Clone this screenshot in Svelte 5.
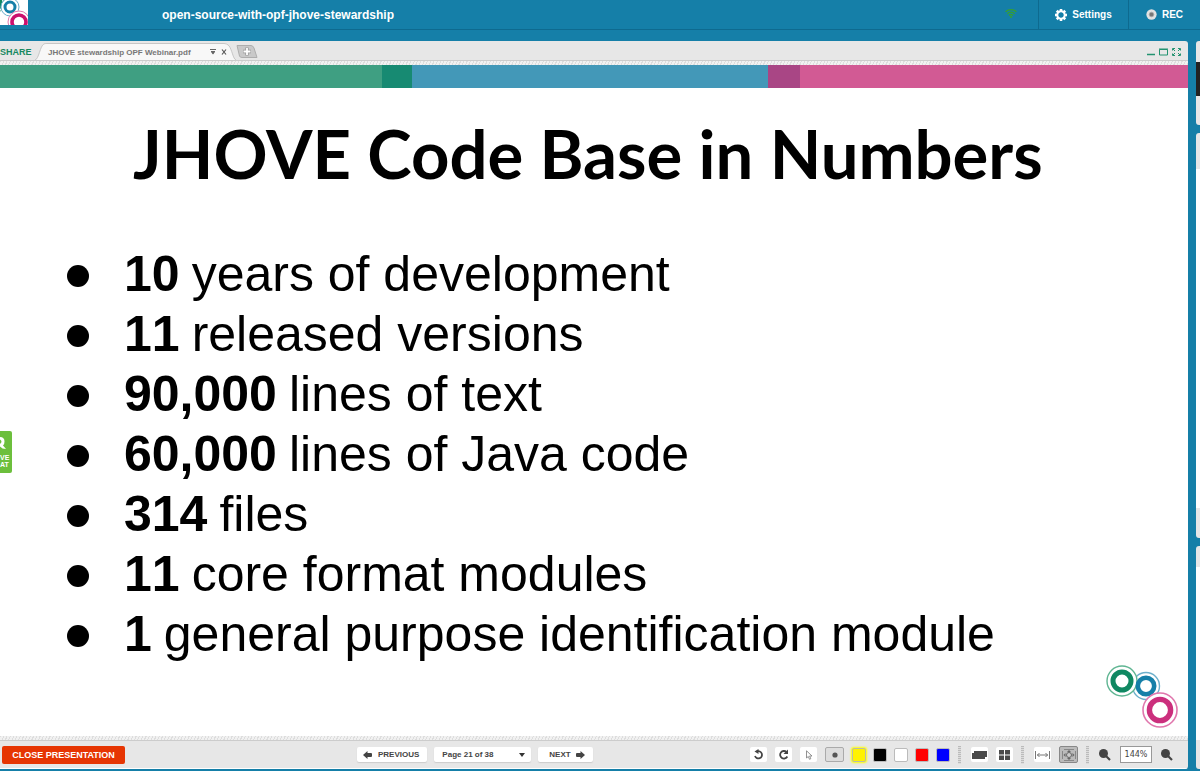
<script lang="ts">
  const stats = [
    { value: '10', text: 'years of development' },
    { value: '11', text: 'released versions' },
    { value: '90,000', text: 'lines of text' },
    { value: '60,000', text: 'lines of Java code' },
    { value: '314', text: 'files' },
    { value: '11', text: 'core format modules' },
    { value: '1', text: 'general purpose identification module' }
  ];

  const colors = [
    { name: 'Yellow', key: 'yellow' },
    { name: 'Black', key: 'black' },
    { name: 'White', key: 'white' },
    { name: 'Red', key: 'red' },
    { name: 'Blue', key: 'blue' }
  ];

  const teeth = [0, 45, 90, 135, 180, 225, 270, 315];

  let color = $state('yellow');
  let page = $state('21');
  let zoom = $state('144%');
</script>

{#snippet magnifier()}
  <svg width="12" height="12" viewBox="0 0 12 12">
    <circle cx="4.5" cy="4.5" r="4.5" fill="#444" />
    <path d="M7 7L11 11" stroke="#444" stroke-width="2.2" />
  </svg>
{/snippet}

<div class="room">
  <header class="topbar">
    <svg class="brand" width="28" height="25" viewBox="0 0 28 25" aria-hidden="true">
      <rect width="28" height="25" fill="#fff" />
      <circle cx="-7" cy="3" r="11" fill="none" stroke="#5fb592" />
      <circle cx="-7" cy="3" r="8" fill="none" stroke="#108862" stroke-width="3" />
      <circle cx="10" cy="7" r="9" fill="#fff" stroke="#6db0cc" />
      <circle cx="10" cy="7" r="5" fill="#fff" stroke="#157fa8" stroke-width="3" />
      <circle cx="19" cy="22" r="11" fill="#fff" stroke="#e077ad" />
      <circle cx="19" cy="22" r="7" fill="#fff" stroke="#cb0f6d" stroke-width="3.6" />
    </svg>
    <h1>open-source-with-opf-jhove-stewardship</h1>
    <svg class="signal" width="12" height="10" viewBox="0 0 12 10" fill="none" stroke="#37a030" stroke-width="1.3" aria-hidden="true">
      <path d="M.6 3.800A7.600 7.600 0 0 1 11.400 3.800M2.300 5.700A5.200 5.200 0 0 1 9.700 5.700M4 7.500A2.900 2.900 0 0 1 8 7.500" />
      <circle cx="6" cy="9" r="1" fill="#37a030" stroke="none" />
    </svg>
    <button class="top-action settings">
      <svg width="12" height="12" viewBox="-6 -6 12 12" aria-hidden="true">
        {#each teeth as angle}
          <rect x="-1.300" y="-6" width="2.600" height="3" fill="#fff" transform="rotate({angle})" />
        {/each}
        <circle r="3.700" fill="none" stroke="#fff" stroke-width="2" />
      </svg>
      Settings
    </button>
    <button class="top-action rec">
      <svg width="11" height="11" viewBox="0 0 12 12" aria-hidden="true">
        <circle cx="6" cy="6" r="5.600" fill="#e2e2e2" />
        <circle cx="6" cy="6" r="2.500" fill="#777" stroke="#aaa" />
      </svg>
      REC
    </button>
  </header>

  <div class="workspace">
    <main class="panel">
      <div class="tabs">
        <span class="share">SHARE</span>
        <div class="tab">
          <svg class="tab-shape" viewBox="0 0 202 18" preserveAspectRatio="none" aria-hidden="true">
            <path d="M0 18C4 17 5 3 9 1Q10 .5 12 .5H190Q193 .5 195 3C198 7 199 17 202 18" fill="#f8f8f8" stroke="#c4c4c4" />
          </svg>
          <span class="tab-name">JHOVE stewardship OPF Webinar.pdf</span>
          <button aria-label="Document menu">
            <svg width="6" height="6" viewBox="0 0 6 6" fill="none" stroke="#666"><path d="M0 .5H6M1 2.500H5M3 2V5" /><path d="M1 3H5L3 5.500Z" fill="#666" stroke="none" /></svg>
          </button>
          <button aria-label="Close document">
            <svg width="6" height="6" viewBox="0 0 6 6" stroke="#555" stroke-width="1.2"><path d="M1 .5L5 5.500M5 .5L1 5.500" /></svg>
          </button>
        </div>
        <button class="add" aria-label="Add document">
          <svg width="22" height="13" viewBox="0 0 22 13">
            <path d="M1 .5H15Q17 .5 18 3L21 12.500H6Q4 12.500 3.500 11Z" fill="#c9c9c9" stroke="#adadad" />
            <path d="M11 2.500V10.500M7 6.500H15" stroke="#999" stroke-width="3.400" />
            <path d="M11 3V10M7.500 6.500H14.500" stroke="#fff" stroke-width="1.800" />
          </svg>
        </button>
        <div class="window-tools">
          <button aria-label="Minimize"><svg width="8" height="8" viewBox="0 0 8 8"><path d="M0 6.500H8" stroke="#239370" stroke-width="1.500" /></svg></button>
          <button aria-label="Maximize"><svg width="9" height="8" viewBox="0 0 9 8"><path d="M.5 1.500H8.500V7H.5ZM0 1H9" fill="none" stroke="#239370" /></svg></button>
          <button aria-label="Full screen"><svg width="9" height="8" viewBox="0 0 9 8" fill="none" stroke="#239370"><path d="M.5 2.500V.5H3M6 .5H8.500V2.500M.5 5.500V7.500H3M6 7.500H8.500V5.500M1 1L3 3M8 1L6 3M1 7L3 5M8 7L6 5" /></svg></button>
        </div>
      </div>
      <div class="grain"></div>

      <section class="slide">
        <div class="stripe" aria-hidden="true"><i></i><i></i><i></i><i></i><i></i></div>
        <h2>JHOVE Code Base in Numbers</h2>
        <ul>
          {#each stats as stat}
            <li><b>{stat.value}</b> {stat.text}</li>
          {/each}
        </ul>
        <svg class="slide-logo" width="74" height="64" viewBox="0 0 74 64" aria-hidden="true">
          <circle cx="40" cy="21" r="13.500" fill="#fff" stroke="#6db0cc" stroke-width="1.400" />
          <circle cx="16" cy="16" r="15" fill="#fff" stroke="#5fb592" stroke-width="1.400" />
          <circle cx="16" cy="16" r="9" fill="#fff" stroke="#108862" stroke-width="5" />
          <circle cx="40" cy="21" r="8.200" fill="#fff" stroke="#157fa8" stroke-width="4.600" />
          <circle cx="54" cy="45" r="17" fill="#fff" stroke="#e077ad" stroke-width="1.600" />
          <circle cx="54" cy="45" r="10.600" fill="#fff" stroke="#cb2f7d" stroke-width="5.400" />
        </svg>
        <button class="chat" aria-label="Live chat">
          <svg width="6" height="14" viewBox="0 0 6 14"><path d="M0 1Q4.500 1 4.500 5.500Q4.500 8.500 3 9.500L6 13Q2 13 0 10.500Z" fill="#fff" /><path d="M0 3.500Q3 5.500 0 8Z" fill="#6cbf3c" /></svg>
          <span>VE</span>
          <span>AT</span>
        </button>
      </section>

      <div class="grain"></div>
      <footer class="toolbar">
        <button class="close">CLOSE PRESENTATION</button>
        <div class="pager">
          <button class="btn">
            <svg width="9" height="8" viewBox="0 0 9 8"><path d="M0 4L4.500 0V2H8Q9 2 9 3V5Q9 6 8 6H4.500V8Z" fill="#444" /></svg>
            PREVIOUS
          </button>
          <div class="page">
            <select aria-label="Page" bind:value={page}>
              <option value="21">Page 21 of 38</option>
              <option value="22">Page 22 of 38</option>
            </select>
            <svg width="6" height="4" viewBox="0 0 6 4" aria-hidden="true"><path d="M0 0H6L3 4Z" fill="#333" /></svg>
          </div>
          <button class="btn next">
            NEXT
            <svg width="9" height="8" viewBox="0 0 9 8"><path d="M9 4L4.500 0V2H1Q0 2 0 3V5Q0 6 1 6H4.500V8Z" fill="#444" /></svg>
          </button>
        </div>

        <div class="tools">
          <button class="tool" aria-label="Undo">
            <svg width="11" height="11" viewBox="0 0 11 11"><path d="M4 2.500A3.600 3.600 0 1 1 2 7" fill="none" stroke="#444" stroke-width="1.800" /><path d="M5.500 0V5L1.500 2.500Z" fill="#444" /></svg>
          </button>
          <button class="tool" aria-label="Redo">
            <svg width="11" height="11" viewBox="0 0 11 11"><path d="M8.500 3A3.800 3.800 0 1 0 9.300 7.500" fill="none" stroke="#444" stroke-width="1.800" /><path d="M10 .5V5H5.500Z" fill="#444" /></svg>
          </button>
          <button class="tool" aria-label="Pointer">
            <svg width="8" height="10" viewBox="0 0 8 10"><path d="M1.500 .8V8L3.300 6.500L4.500 9.300L5.800 8.700L4.600 6H7Z" fill="#fff" stroke="#777" stroke-width=".8" /></svg>
          </button>
          <button class="tool dot" aria-label="Dot">
            <svg width="6" height="6" viewBox="0 0 6 6"><circle cx="3" cy="3" r="2.600" fill="#555" /></svg>
          </button>
          <div class="palette">
            {#each colors as item}
              <button
                class="swatch {item.key}"
                class:active={color === item.key}
                aria-label={item.name}
                onclick={() => (color = item.key)}
              ></button>
            {/each}
          </div>
        </div>
        <span class="divider"></span>
        <div class="tools">
          <button class="tool" aria-label="Slide view">
            <svg width="15" height="8" viewBox="0 0 15 8"><path d="M2 0H15V6H13V8H0V2H2Z" fill="#4a4a4a" /></svg>
          </button>
          <button class="tool" aria-label="Thumbnails">
            <svg width="11" height="10" viewBox="0 0 11 10" fill="#4a4a4a"><path d="M0 0H5V4.500H0ZM6 0H11V4.500H6ZM0 5.500H5V10H0ZM6 5.500H11V10H6Z" /></svg>
          </button>
        </div>
        <span class="divider"></span>
        <div class="tools">
          <button class="tool" aria-label="Fit width">
            <svg width="15" height="8" viewBox="0 0 15 8" fill="none" stroke="#777"><path d="M.5 0V8M14.500 0V8M2 4H13M4.500 2L2.500 4L4.500 6M10.500 2L12.500 4L10.500 6" /></svg>
          </button>
          <button class="tool pressed" aria-label="Fit page">
            <svg width="14" height="12" viewBox="0 0 14 12" fill="none" stroke="#666"><path d="M2 .5H12M2 11.500H12M.5 2V10M13.500 2V10" stroke="#888" /><circle cx="7" cy="6" r="2.500" fill="#ccc" /><path d="M7 1L9 3H5ZM7 11L9 9H5ZM1.500 6L3.500 4V8ZM12.500 6L10.500 4V8Z" fill="#666" stroke="none" /></svg>
          </button>
        </div>
        <span class="divider"></span>
        <div class="zoom">
          <button aria-label="Zoom out">{@render magnifier()}</button>
          <input aria-label="Zoom level" bind:value={zoom} />
          <button aria-label="Zoom in">{@render magnifier()}</button>
        </div>
      </footer>
    </main>

    <aside class="side">
      <div class="card video"><div></div></div>
      <div class="card people"><div></div></div>
      <div class="card talk"><div></div></div>
    </aside>
  </div>
</div>

<style>
:global(body) {
  margin: 0;
  background: #157fa8;
}

.room {
  display: flex;
  flex-direction: column;
  box-sizing: border-box;
  min-height: 100vh;
  padding-bottom: 2px;
  overflow: hidden;
  background: #157fa8;
  font-family: "Liberation Sans", Arial, sans-serif;
  color: #444;
}

button,
input,
select {
  box-sizing: border-box;
  margin: 0;
  padding: 0;
  border: 0;
  background: none;
  font: inherit;
  color: inherit;
}

button {
  display: flex;
  align-items: center;
  justify-content: center;
  white-space: nowrap;
  cursor: pointer;
}

svg {
  display: block;
  flex: none;
}

/* Top bar */
.topbar {
  display: flex;
  height: 29px;
  border-bottom: 1px solid #0e6a8f;
  color: #fff;
}

.topbar h1 {
  flex: 1;
  margin: 0 0 0 134px;
  font-size: 12px;
  line-height: 30px;
}

.signal {
  margin: 8px 21px 0 0;
}

.top-action {
  gap: 5px;
  height: 29px;
  border-left: 1px solid #0e6a8f;
  font-size: 10px;
  font-weight: bold;
}

.settings {
  width: 90px;
}

.rec {
  width: 72px;
}

.workspace {
  display: flex;
  flex: 1;
  gap: 8px;
  padding-top: 11px;
}

.panel {
  display: flex;
  flex: 1;
  flex-direction: column;
  min-width: 0;
  border-radius: 0 3px 3px 0;
  background: #e7e7e7;
  overflow: hidden;
}

/* Tabs */
.tabs {
  display: flex;
  align-items: center;
  height: 20px;
  padding-top: 2px;
  border-bottom: 1px solid #ccc;
  box-sizing: border-box;
}

.share {
  width: 35px;
  font-size: 9px;
  font-weight: bold;
  color: #17885f;
}

.tab {
  position: relative;
  display: flex;
  align-items: center;
  align-self: flex-end;
  gap: 5px;
  box-sizing: border-box;
  width: 201px;
  height: 17px;
  padding: 1px 0 0 13px;
}

.tab-shape {
  position: absolute;
  inset: 0;
  width: 100%;
  height: 100%;
}

.tab-name {
  position: relative;
  width: 157px;
  font-size: 8px;
  font-weight: bold;
  color: #777;
  white-space: nowrap;
}

.tab button {
  position: relative;
}

.window-tools {
  display: flex;
  gap: 4px;
  margin-left: auto;
  padding-right: 7px;
}

.grain {
  height: 4px;
  background: repeating-linear-gradient(115deg, #ddd 0 1px, #f1f1f1 1px 3px);
}

/* Slide */
.slide {
  position: relative;
  flex: 1;
  background: #fff;
  color: #000;
}

.stripe {
  display: grid;
  grid-template-columns: 382fr 30fr 356fr 32fr 388fr;
  height: 23px;
}

.stripe i:nth-child(1) { background: #3f9f82; }
.stripe i:nth-child(2) { background: #178a72; }
.stripe i:nth-child(3) { background: #4398b8; }
.stripe i:nth-child(4) { background: #a94685; }
.stripe i:nth-child(5) { background: #d25a94; }

.slide h2 {
  margin: 25px 0 0 133px;
  font-family: Lato, "Open Sans", sans-serif;
  font-size: 67px;
  font-weight: 700;
  line-height: 80px;
  white-space: nowrap;
}

.slide ul {
  margin: 51px 0 0;
  padding: 0 0 72px 67px;
  list-style: none;
}

.slide li {
  display: flex;
  align-items: flex-start;
  gap: 12px;
  font-size: 50px;
  line-height: 60px;
  font-kerning: none;
  white-space: nowrap;
}

.slide li::before {
  content: "";
  width: 22px;
  height: 22px;
  margin: 21px 23px 0 0;
  border-radius: 50%;
  background: #000;
}

.slide-logo {
  position: absolute;
  right: 8px;
  bottom: 7px;
}

.chat {
  position: absolute;
  left: 0;
  top: 366px;
  flex-direction: column;
  align-items: flex-start;
  width: 12px;
  height: 42px;
  border-radius: 0 2px 2px 0;
  background: #6cbf3c;
  color: #fff;
  font-size: 7px;
  font-weight: bold;
  line-height: 7px;
}

.chat svg {
  margin-bottom: 4px;
}

/* Toolbar */
.toolbar {
  display: flex;
  align-items: center;
  height: 29px;
  box-sizing: border-box;
  border-top: 1px solid #ccc;
  border-bottom: 1px solid #fff;
  padding: 0 15px 0 2px;
  font-size: 8px;
  font-weight: bold;
}

.close {
  width: 123px;
  height: 18px;
  border-radius: 2px;
  background: #e63502;
  color: #fff;
  font-size: 9px;
}

.pager {
  display: flex;
  flex: 1;
  gap: 7px;
  margin-left: 232px;
}

.btn,
.page {
  height: 15px;
  border-radius: 2px;
  background: #fff;
  box-shadow: 0 1px 1px #ccc;
}

.btn {
  gap: 6px;
  padding: 0 8px 0 6px;
}

.btn.next {
  gap: 5px;
  padding: 0 8px 0 11px;
}

.page {
  position: relative;
  width: 97px;
}

.page select {
  display: block;
  width: 100%;
  height: 100%;
  padding: 0 8px;
  appearance: none;
}

.page svg {
  position: absolute;
  right: 6px;
  top: 6px;
  pointer-events: none;
}

.tools {
  display: flex;
  align-items: center;
  gap: 8px;
}

.palette {
  display: flex;
  gap: 7px;
}

.tool {
  width: 17px;
  height: 15px;
  border-radius: 2px;
  background: #fff;
}

.tool.dot {
  width: 19px;
  border: 1px solid #aaa;
  background: #ddd;
}

.tool.pressed {
  width: 19px;
  height: 17px;
  border: 1px solid #888;
  background: #bbb;
}

.swatch {
  width: 14px;
  height: 14px;
  border: 1px solid #bbb;
  border-radius: 2px;
}

.yellow { background: #fff200; }
.black { background: #000; }
.white { background: #fff; }
.red { background: #f00; }
.blue { background: #00f; }

.swatch.active {
  border-color: #bba;
  box-shadow: 0 0 2px 1px #ff0;
}

.divider {
  width: 3px;
  height: 18px;
  margin: 0 10px 0 8px;
  background: repeating-linear-gradient(#bbb 0 1px, #ddd 1px 2px);
}

.zoom {
  display: flex;
  align-items: center;
  gap: 9px;
}

.zoom input {
  width: 32px;
  height: 17px;
  border: 1px solid #999;
  background: #fff;
  font-family: "DejaVu Sans", Verdana, sans-serif;
  font-size: 8px;
  font-weight: normal;
  text-align: center;
}

/* Right column, mostly clipped by the window */
.side {
  display: flex;
  flex-direction: column;
  gap: 8px;
  width: 4px;
}

.card {
  border-radius: 3px 0 0 3px;
  background: #e7e7e7;
  overflow: hidden;
}

.video { height: 84px; }
.people { height: 405px; }

.talk {
  display: flex;
  flex: 1;
}

.video div {
  height: 34px;
  margin-top: 21px;
  background: #222;
}

.people div {
  height: 339px;
  margin-top: 36px;
  background: #fff;
}

.talk div {
  flex: 1;
  margin: 21px 0 29px;
  background: #fff;
}
</style>
